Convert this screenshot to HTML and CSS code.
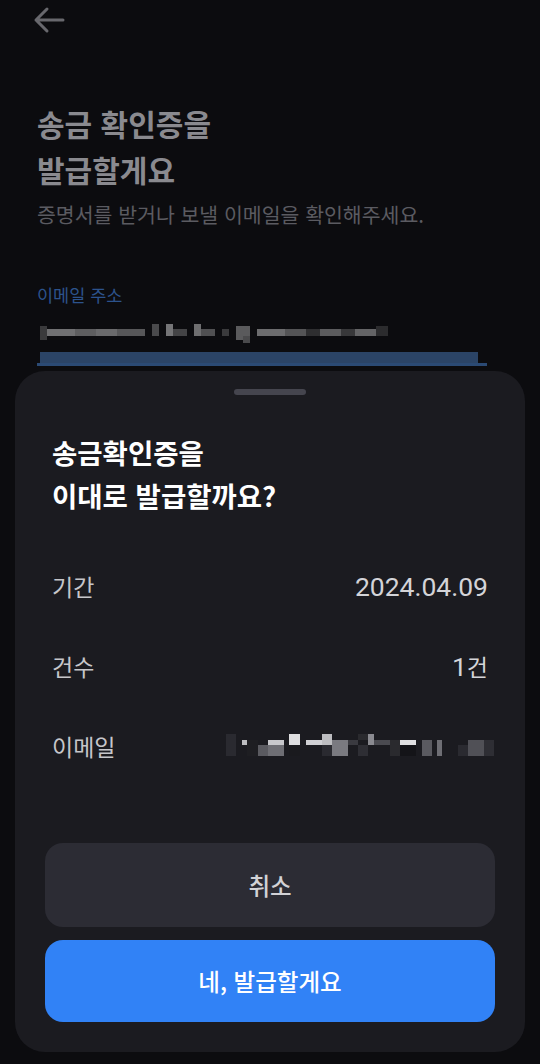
FILE: index.html
```html
<!DOCTYPE html>
<html lang="ko">
<head>
  <meta charset="UTF-8">
  <meta name="viewport" content="width=device-width, initial-scale=1.0">
  <title>송금 확인증 발급</title>
  <link rel="stylesheet" href="styles.css">
</head>
<body>
  <div class="page">
    <button class="back" aria-label="뒤로">
      <svg width="32" height="30" viewBox="0 0 32 30">
        <path d="M30 14H3M14 3L3 14l11 11" fill="none" stroke="#68686d" stroke-width="3" stroke-linecap="round" stroke-linejoin="round"/>
      </svg>
    </button>

    <h1 class="title">송금 확인증을<br>발급할게요</h1>
    <p class="subtitle">증명서를 받거나 보낼 이메일을 확인해주세요.</p>

    <div class="field">
      <label class="field-label">이메일 주소</label>
      <svg class="mosaic" width="350" height="22" viewBox="0 0 350 22">
        <rect x="0" y="4" width="7" height="14" fill="#3a3a3c"/>
        <rect x="7" y="7" width="28" height="7" fill="#707072"/>
        <rect x="35" y="7" width="21" height="7" fill="#5e5e60"/>
        <rect x="56" y="7" width="21" height="7" fill="#6a6a6c"/>
        <rect x="77" y="7" width="28" height="7" fill="#575759"/>
        <rect x="112" y="2" width="7" height="12" fill="#4a4a4c"/>
        <rect x="126" y="2" width="7" height="12" fill="#757577"/>
        <rect x="133" y="7" width="14" height="7" fill="#444446"/>
        <rect x="154" y="2" width="7" height="12" fill="#6e6e70"/>
        <rect x="161" y="7" width="14" height="7" fill="#505052"/>
        <rect x="182" y="7" width="7" height="7" fill="#3a3a3c"/>
        <rect x="196" y="4" width="14" height="14" fill="#5a5a5c"/>
        <rect x="203" y="14" width="7" height="7" fill="#4a4a4c"/>
        <rect x="217" y="7" width="28" height="7" fill="#6c6c6e"/>
        <rect x="245" y="7" width="21" height="7" fill="#545456"/>
        <rect x="266" y="7" width="14" height="7" fill="#2e2e30"/>
        <rect x="280" y="7" width="21" height="7" fill="#5c5c5e"/>
        <rect x="301" y="7" width="14" height="7" fill="#38383a"/>
        <rect x="315" y="7" width="21" height="7" fill="#646466"/>
        <rect x="336" y="4" width="12" height="10" fill="#2c2c2e"/>
      </svg>
      <div class="underline">
        <div class="underline-fill"></div>
      </div>
    </div>
  </div>

  <div class="sheet">
    <div class="handle"></div>
    <h2 class="sheet-title">송금확인증을<br>이대로 발급할까요?</h2>

    <dl class="details">
      <div class="row">
        <dt>기간</dt>
        <dd class="num">2024.04.09</dd>
      </div>
      <div class="row">
        <dt>건수</dt>
        <dd><span class="num">1</span>건</dd>
      </div>
      <div class="row">
        <dt>이메일</dt>
        <dd>
          <svg class="mosaic" width="274" height="24" viewBox="0 0 274 24">
            <rect x="0" y="0" width="10" height="22" fill="#2a2a30"/>
            <rect x="16" y="6" width="5" height="5" fill="#bdbdc0"/>
            <rect x="21" y="6" width="11" height="16" fill="#1e1e22"/>
            <rect x="32" y="11" width="10" height="11" fill="#5a5a60"/>
            <rect x="42" y="6" width="16" height="5" fill="#c8c8cc"/>
            <rect x="42" y="11" width="16" height="11" fill="#6e6e74"/>
            <rect x="63" y="0" width="11" height="11" fill="#dedee0"/>
            <rect x="63" y="11" width="11" height="11" fill="#1a1a1e"/>
            <rect x="80" y="6" width="16" height="5" fill="#d0d0d4"/>
            <rect x="96" y="0" width="10" height="11" fill="#bdbdc0"/>
            <rect x="96" y="11" width="10" height="11" fill="#2a2a30"/>
            <rect x="106" y="6" width="16" height="16" fill="#7a7a80"/>
            <rect x="122" y="6" width="10" height="5" fill="#3a3a40"/>
            <rect x="132" y="0" width="10" height="6" fill="#2a2a2e"/>
            <rect x="132" y="11" width="10" height="11" fill="#2e2e34"/>
            <rect x="142" y="0" width="6" height="11" fill="#8a8a90"/>
            <rect x="148" y="6" width="16" height="5" fill="#4a4a50"/>
            <rect x="164" y="6" width="10" height="16" fill="#2a2a2e"/>
            <rect x="174" y="6" width="16" height="5" fill="#e0e0e2"/>
            <rect x="174" y="11" width="16" height="11" fill="#141418"/>
            <rect x="196" y="6" width="10" height="16" fill="#5a5a60"/>
            <rect x="211" y="6" width="5" height="16" fill="#6e6e74"/>
            <rect x="232" y="11" width="10" height="11" fill="#2a2a30"/>
            <rect x="242" y="6" width="16" height="16" fill="#505056"/>
            <rect x="258" y="6" width="10" height="16" fill="#2e2e34"/>
          </svg>
        </dd>
      </div>
    </dl>

    <div class="actions">
      <button class="btn btn-cancel">취소</button>
      <button class="btn btn-confirm">네, 발급할게요</button>
    </div>
  </div>
</body>
</html>
```

FILE: styles.css
```css
:root {
  --page-bg: #0c0c0f;
  --sheet-bg: #1b1b20;
  --muted-title: #8a8a8f;
  --muted-text: #5b5b61;
  --label-blue: #2c538c;
  --row-label: #c6c6ca;
  --row-value: #d4d4d8;
  --cancel-bg: #2c2c34;
  --primary: #3182f6;
}

* {
  box-sizing: border-box;
}

body {
  margin: 0;
  width: 540px;
  height: 1064px;
  overflow: hidden;
  background: var(--page-bg);
  font-family: "Roboto", "Noto Sans CJK KR", sans-serif;
}

.page {
  padding: 6px 37px 0 37px;
}

.back {
  display: block;
  margin-left: -4px;
  padding: 0;
  border: none;
  background: none;
  width: 32px;
  height: 30px;
}

.title {
  margin: 64px 0 0 0;
  font-size: 30px;
  font-weight: 700;
  line-height: 46px;
  color: var(--muted-title);
  font-family: "Noto Sans CJK KR", sans-serif;
}

.subtitle {
  margin: 8px 0 0 0;
  font-size: 20.5px;
  line-height: 28px;
  color: var(--muted-text);
  font-family: "Noto Sans CJK KR", sans-serif;
}

.field {
  margin-top: 56px;
}

.field-label {
  display: block;
  font-size: 17.5px;
  line-height: 22px;
  color: var(--label-blue);
  font-family: "Noto Sans CJK KR", sans-serif;
}

.field .mosaic {
  display: block;
  margin: 16px 0 0 3px;
}

.underline {
  width: 450px;
  height: 14px;
  margin-top: 8px;
  border-bottom: 3px solid #2b4a74;
}

.underline-fill {
  width: 438px;
  height: 11px;
  margin-left: 3px;
  background: #2b4466;
}

.sheet {
  position: fixed;
  left: 15px;
  right: 15px;
  bottom: 12px;
  height: 681px;
  background: var(--sheet-bg);
  border-radius: 30px;
  padding: 18px 30px 30px 30px;
  display: flex;
  flex-direction: column;
}

.handle {
  align-self: center;
  width: 72px;
  height: 6px;
  border-radius: 3px;
  background: #45454e;
}

.sheet-title {
  margin: 36px 0 0 7px;
  font-size: 27.5px;
  font-weight: 700;
  line-height: 43px;
  color: #ffffff;
  font-family: "Noto Sans CJK KR", sans-serif;
}

.details {
  margin: 29px 7px 0 7px;
}

.row {
  display: flex;
  justify-content: space-between;
  align-items: center;
  height: 80px;
}

.row dt {
  font-size: 23px;
  color: var(--row-label);
  font-family: "Noto Sans CJK KR", sans-serif;
}

.row dd {
  margin: 0;
  font-size: 23px;
  color: var(--row-value);
  font-family: "Noto Sans CJK KR", sans-serif;
  display: flex;
  align-items: center;
}

.row dd.num,
.row .num {
  font-family: "Roboto", sans-serif;
  font-size: 26.5px;
}

.row dd .mosaic {
  display: block;
  margin-right: -12px;
}

.actions {
  margin-top: auto;
  display: flex;
  flex-direction: column;
  gap: 13px;
}

.btn {
  width: 100%;
  border: none;
  border-radius: 18px;
  font-size: 23.5px;
  font-weight: 500;
  font-family: "Noto Sans CJK KR", sans-serif;
  cursor: pointer;
}

.btn-cancel {
  height: 84px;
  background: var(--cancel-bg);
  color: #d2d2d6;
}

.btn-confirm {
  height: 82px;
  background: var(--primary);
  color: #ffffff;
}
```
